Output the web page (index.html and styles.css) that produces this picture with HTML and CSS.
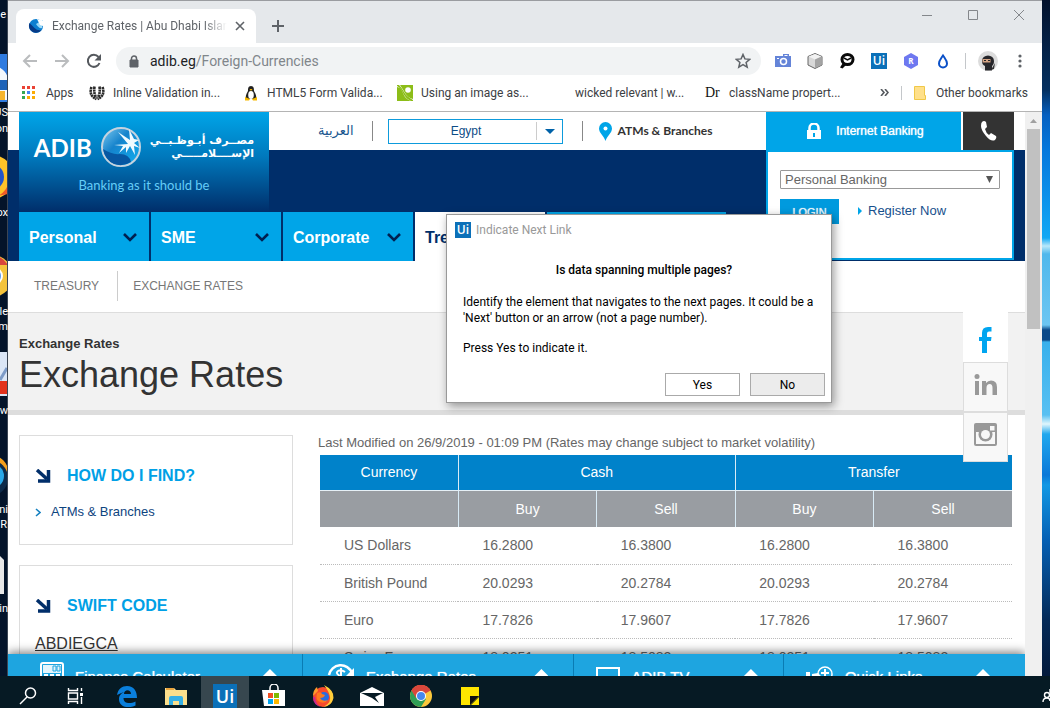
FILE: index.html
```html
<!DOCTYPE html>
<html lang="en">
<head>
<meta charset="utf-8">
<title>Exchange Rates | Abu Dhabi Islamic Bank</title>
<link rel="stylesheet" href="styles.css">
</head>
<body class="desktop">
<div class="workspace">
  <svg class="edge edge-left" width="8" height="676" viewBox="0 0 8 676" aria-hidden="true">
    <rect width="8" height="676" fill="#04142a"/>
    <rect y="54" width="8" height="48" fill="#2f7be0"/>
    <path d="M-8 66a16 16 0 0 1 16 12v22h-16z" fill="#f4f8fc"/><path d="M0 80h8v10H0z" fill="#1f64b8"/><path d="M0 91h5v9H0z" fill="#f6b52e"/>
    <circle cx="-8" cy="177" r="22" fill="#ffc328"/><circle cx="-9" cy="177" r="13" fill="#2456c8"/><path d="M8 160q6 28-10 36L8 194z" fill="#f05a28"/>
    <circle cx="-8" cy="276" r="21" fill="#f4c33c"/><path d="M-8 255a21 21 0 0 1 16 10H-8z" fill="#d8453c"/><circle cx="-6" cy="276" r="8" fill="#5a98ee" stroke="#fff" stroke-width="2"/>
    <rect y="352" width="8" height="44" fill="#dbe6f6"/><path d="M0 380l7-12" stroke="#7d9bc8" stroke-width="3"/><rect y="381" width="8" height="13" fill="#e3331d"/>
    <circle cx="-10" cy="474" r="19" fill="#f5a01c"/><circle cx="-10" cy="478" r="18" fill="#0e2b4a"/><circle cx="-8" cy="476" r="12" fill="#2aa8e8"/>
    <path d="M0 556l4 4v34H0z" fill="#e8e8e8"/>
    <rect x="7" width="1" height="676" fill="#3c4654"/>
    <g fill="#fff" font-family="Roboto, sans-serif" font-size="11" text-anchor="end">
      <text x="6" y="18">e</text><text x="8" y="116">US</text><text x="8" y="132">on</text><text x="8" y="216">ox</text>
      <text x="8" y="315">gle</text><text x="8" y="330">m</text><text x="8" y="414">ew</text><text x="8" y="513">ni</text><text x="7" y="528">R</text><text x="8" y="612">in</text>
    </g>
  </svg>

  <main class="window">
    <div class="tabstrip">
      <div class="tab">
        <svg width="16" height="16" viewBox="0 0 16 16"><circle cx="8" cy="8" r="7" fill="#0d7fd0"/><path d="M1.500 5a7 7 0 0 0 12 7q-4 1-7-2T1.500 5z" fill="#073a86"/><path d="M8 6l7-4-1 8q-3 1-6-4z" fill="#9ad9f8"/><path d="M9 1l6 2v5l-3-1z" fill="#fff"/></svg>
        <span class="tab-title">Exchange Rates | Abu Dhabi Islamic</span>
        <button class="icon-btn" aria-label="Close tab"><svg width="10" height="10" viewBox="0 0 10 10"><path d="M1 1l8 8M9 1l-8 8" stroke="#5f6368" stroke-width="1.6"/></svg></button>
      </div>
      <button class="icon-btn newtab" aria-label="New tab"><svg width="14" height="14" viewBox="0 0 14 14"><path d="M7 1v12M1 7h12" stroke="#5f6368" stroke-width="2"/></svg></button>
      <div class="win-buttons">
        <button class="icon-btn" aria-label="Minimize"><svg width="12" height="12" viewBox="0 0 12 12"><path d="M1 6.500h10" stroke="#84878b"/></svg></button>
        <button class="icon-btn" aria-label="Maximize"><svg width="12" height="12" viewBox="0 0 12 12"><path d="M1.500 1.500h9v9h-9z" fill="none" stroke="#84878b"/></svg></button>
        <button class="icon-btn" aria-label="Close window"><svg width="12" height="12" viewBox="0 0 12 12"><path d="M1 1l10 10M11 1L1 11" stroke="#84878b"/></svg></button>
      </div>
    </div>

    <div class="toolbar">
      <div class="nav-buttons">
        <button class="icon-btn" aria-label="Back"><svg width="16" height="16" viewBox="0 0 16 16"><path d="M15 8H2M8 2L2 8l6 6" fill="none" stroke="#babcbe" stroke-width="2"/></svg></button>
        <button class="icon-btn" aria-label="Forward"><svg width="16" height="16" viewBox="0 0 16 16"><path d="M1 8h13M8 2l6 6-6 6" fill="none" stroke="#babcbe" stroke-width="2"/></svg></button>
        <button class="icon-btn" aria-label="Reload"><svg width="16" height="16" viewBox="0 0 16 16"><path d="M13.500 10A6 6 0 1 1 12.500 4" fill="none" stroke="#55595e" stroke-width="2"/><path d="M15 1v6.500H8.500z" fill="#55595e"/></svg></button>
      </div>
      <div class="omnibox">
        <svg width="10" height="13" viewBox="0 0 10 13"><path d="M1 5h8v7H1z" fill="#5f6368" stroke="#5f6368"/><path d="M2.500 5V3.500a2.500 2.500 0 0 1 5 0V5" fill="none" stroke="#5f6368" stroke-width="1.500"/></svg>
        <a class="url" href="#"><b>adib.eg</b>/Foreign-Currencies</a>
        <button class="icon-btn" aria-label="Bookmark this page"><svg width="16" height="16" viewBox="0 0 16 16"><path d="M8 1.500l1.900 4.400 4.800.4-3.600 3.200 1.100 4.700L8 11.700l-4.200 2.500 1.100-4.700L1.300 6.300l4.800-.4z" fill="none" stroke="#5f6368" stroke-width="1.500"/></svg></button>
      </div>
      <div class="extensions">
        <svg width="16" height="16" viewBox="0 0 16 16"><path d="M0 3h8V1h6v2h2v11H0z" fill="#6484d8"/><path d="M9.500 2h3v1h-3z" fill="#fff"/><circle cx="8.500" cy="8.500" r="3" fill="#6484d8" stroke="#fff" stroke-width="1.500"/><path d="M2 5.500h2" stroke="#fff"/></svg>
        <svg width="16" height="16" viewBox="0 0 16 16"><path d="M8 .5l7 3v8.500l-7 3.500-7-3.500V3.500z" fill="#d8d8d8" stroke="#666"/><path d="M1.500 3.500l6.500 3 6.500-3-6.500-2.500z" fill="#f2f2f2"/><path d="M8 6.500l6.500-3V12L8 15z" fill="#a4a4a4"/></svg>
        <svg width="16" height="16" viewBox="0 0 16 16"><ellipse cx="8.500" cy="6.500" rx="5.500" ry="5" fill="#fff" stroke="#0a0a0a" stroke-width="3"/><path d="M4.500 9L1 14.500l2.500 1L8 11z" fill="#0a0a0a"/><path d="M5 5l3.500 2L12 5" fill="none" stroke="#0a0a0a" stroke-width="1.500"/></svg>
        <span class="ui-badge">Ui</span>
        <svg width="16" height="16" viewBox="0 0 16 16"><path d="M8 0l7 4v8l-7 4-7-4V4z" fill="#6e78f0"/><text x="8" y="11" font-family="Open Sans, sans-serif" font-size="8" font-weight="700" fill="#fff" text-anchor="middle">R</text></svg>
        <svg width="16" height="16" viewBox="0 0 16 16"><path d="M8 2.500c2 3 4 5 4 8a4 4 0 0 1-8 0c0-3 2-5 4-8z" fill="#fff" stroke="#0a50c8" stroke-width="2"/><path d="M4.500 11a3.500 3.500 0 0 0 7 0l-1 3-2.500 1-2.500-1z" fill="#0a50c8"/></svg>
      </div>
      <div class="profile">
        <svg width="20" height="20" viewBox="0 0 20 20"><circle cx="10" cy="10" r="10" fill="#dcdcdc"/><path d="M4 10a6 5.500 0 0 1 12 0c0 3-1 4-2 5v4.500H7V15c-2-1-3-2-3-5z" fill="#26262a"/><path d="M4.500 8h8v3.500h-8z" fill="#d3a384"/><path d="M6 9.500h2M10 9.500h2" stroke="#222"/><path d="M17 12l-1 6-3 1z" fill="#333"/></svg>
        <button class="icon-btn" aria-label="Menu"><svg width="4" height="14" viewBox="0 0 4 14" fill="#5f6368"><circle cx="2" cy="2" r="1.600"/><circle cx="2" cy="7" r="1.600"/><circle cx="2" cy="12" r="1.600"/></svg></button>
      </div>
    </div>

    <nav class="bookmarks" aria-label="Bookmarks">
      <a class="apps" href="#"><svg width="14" height="14" viewBox="0 0 14 14"><path d="M0 0h3v3H0zM5 0h3v3H5zM10 0h3v3h-3z" fill="#ea4335"/><path d="M0 5h3v3H0zM0 10h3v3H0z" fill="#34a853"/><path d="M5 5h3v3H5z" fill="#4285f4"/><path d="M10 5h3v3h-3zM5 10h3v3H5zM10 10h3v3h-3z" fill="#fbac04"/></svg>Apps</a>
      <a class="bookmark" href="#"><svg width="16" height="16" viewBox="0 0 16 16"><path d="M5.500 1.500q-1 8 2 11M2.500 2q-3 9 5 12M10.500 1.500q1 8-2 11M13.500 2q3 9-5 12" fill="none" stroke="#2a2a2a" stroke-width="2.600" stroke-dasharray="2.200 .5"/></svg><span>Inline Validation in...</span></a>
      <a class="bookmark" href="#"><svg width="16" height="16" viewBox="0 0 16 16"><path d="M8 1c3 0 3 3 3 5 1 2 3 5 2 8H3c-1-3 1-6 2-8 0-2 0-5 3-5z" fill="#222"/><ellipse cx="8" cy="10" rx="2.800" ry="4" fill="#fff"/><path d="M6.500 4h3L8 6z" fill="#f5b800"/><path d="M2 12l5 2-1 1.500H2zM14 12l-5 2 1 1.500h4z" fill="#f5b800"/></svg><span>HTML5 Form Valida...</span></a>
      <a class="bookmark" href="#"><svg width="16" height="16" viewBox="0 0 16 16"><path d="M0 0h16v16H0z" fill="#8cbd18"/><path d="M0 2q4 0 6 6t8 8h2v-2q-5-1-8-6T3 0H0z" fill="#fff"/><path d="M0 0h2q3 3 5 7t9 8v1h-2q-6-3-8-8T0 1z" fill="#8cbd18"/><circle cx="11" cy="5" r="2.800" fill="#fff"/></svg><span>Using an image as...</span></a>
      <a class="bookmark" href="#"><i class="no-icon"></i><span>wicked relevant | w...</span></a>
      <a class="bookmark" href="#"><b class="serif-mark">Dr</b><span>className propert...</span></a>
      <button class="icon-btn overflow" aria-label="More bookmarks"><svg width="9" height="7" viewBox="0 0 9 7"><path d="M1 0l3 3.500L1 7M5 0l3 3.500L5 7" fill="none" stroke="#55595e" stroke-width="1.600"/></svg></button>
      <a class="other" href="#"><svg width="12" height="14" viewBox="0 0 12 14"><path d="M.5.5h10v9h1v4H.5z" fill="#ffe08a" stroke="#f0c848"/></svg>Other bookmarks</a>
    </nav>

    <div class="viewport">
      <div class="page">
        <div class="page-content">
          <header class="site-header">
            <div class="header-main">
              <div class="header-top">
                <a class="logo" href="#">
                  <span class="logo-row">
                    <span class="logo-name">ADIB</span>
                    <svg width="42" height="42" viewBox="0 0 42 42"><defs><linearGradient id="globe" x1="0" y1="0" x2="1" y2="1"><stop offset="0" stop-color="#7fcbf0"/><stop offset=".4" stop-color="#1583cc"/><stop offset="1" stop-color="#12b0f0"/></linearGradient></defs><circle cx="21" cy="21" r="19" fill="url(#globe)" stroke="#c4d3df" stroke-width="2"/><path d="M3 23q9 6 17 5 9 0 11 8-8 5-17 2-9-4-11-15z" fill="#0757a2"/><path d="M14 19l14-1L18 6l12 8-1-11 5 10 5 1-5 3 6 5-6-2 1 9-5-9-4 7v-6l-7 6 4-7z" fill="#f2fbff"/></svg>
                    <span class="logo-arabic" lang="ar" dir="rtl">مصــرف أبـوظـبــي<br>الإســــلامـــــي</span>
                  </span>
                  <span class="tagline">Banking as it should be</span>
                </a>
                <div class="utilities">
                  <a class="lang" lang="ar" href="#">العربية</a>
                  <label class="country"><select aria-label="Country"><option>Egypt</option></select><svg width="26" height="18" viewBox="0 0 26 18"><path d="M.5 0v18" stroke="#ccc"/><path d="M9 7h10l-5 5z" fill="#0062a8"/></svg></label>
                  <a class="branches" href="#"><svg width="13" height="19" viewBox="0 0 13 19"><path d="M6.500 0A6.500 6.500 0 0 1 13 6.500C13 11 8 14 6.500 19 5 14 0 11 0 6.500A6.500 6.500 0 0 1 6.500 0z" fill="#00a5e8"/><circle cx="6.500" cy="6.500" r="2" fill="#fff"/></svg>ATMs &amp; Branches</a>
                </div>
              </div>
              <nav class="main-nav">
                <a href="#">Personal<svg width="14" height="9" viewBox="0 0 14 9"><path d="M1 1l6 6 6-6" fill="none" stroke="#002050" stroke-width="2.600"/></svg></a>
                <a href="#">SME<svg width="14" height="9" viewBox="0 0 14 9"><path d="M1 1l6 6 6-6" fill="none" stroke="#002050" stroke-width="2.600"/></svg></a>
                <a href="#">Corporate<svg width="14" height="9" viewBox="0 0 14 9"><path d="M1 1l6 6 6-6" fill="none" stroke="#002050" stroke-width="2.600"/></svg></a>
                <a class="current" href="#">Treasury</a>
                <a class="wide" href="#" aria-label="More"></a>
              </nav>
            </div>
            <div class="banking">
              <div class="banking-tabs">
                <a class="internet" href="#"><svg width="14" height="16" viewBox="0 0 14 16"><path d="M0 7h14v9H0z" fill="#fff"/><path d="M2.500 8V5a4.500 4.500 0 0 1 9 0v3" fill="none" stroke="#fff" stroke-width="2.500"/><path d="M7 10v4" stroke="#00a5e8" stroke-width="2"/></svg>Internet Banking</a>
                <a class="phone" href="#" aria-label="Phone banking"><svg width="16" height="20" viewBox="0 0 16 20"><path d="M1 1q2-2 4 0l1 5-2 2q1 4 4 6l2-2 5 3q1 2-1 4-4 2-9-4T0 5q0-3 1-4z" fill="#fff"/></svg></a>
              </div>
              <form class="login">
                <label class="account"><select aria-label="Account type"><option>Personal Banking</option></select><svg width="8" height="8" viewBox="0 0 8 8"><path d="M0 0h7L3.500 7z" fill="#555"/></svg></label>
                <div class="login-row"><button class="login-btn" type="button">LOGIN</button><a class="register" href="#"><svg width="4" height="8" viewBox="0 0 4 8"><path d="M0 0l4 4-4 4z" fill="#00a5e8"/></svg>Register Now</a></div>
              </form>
            </div>
          </header>

          <nav class="subnav"><a href="#">TREASURY</a><a href="#">EXCHANGE RATES</a></nav>

          <section class="title-band"><p>Exchange Rates</p><h1>Exchange Rates</h1></section>

          <div class="columns">
            <aside class="sidebar">
              <section class="card">
                <h2><svg width="16" height="15" viewBox="0 0 16 15"><path d="M2 1l10 9" stroke="#002e6a" stroke-width="3.500"/><path d="M13.500 1v11H3" fill="none" stroke="#002e6a" stroke-width="3.500"/></svg>HOW DO I FIND?</h2>
                <a class="card-link" href="#"><svg width="6" height="9" viewBox="0 0 6 9"><path d="M1 1l4 3.500L1 8" fill="none" stroke="#1580c0" stroke-width="1.600"/></svg>ATMs &amp; Branches</a>
              </section>
              <section class="card">
                <h2><svg width="16" height="15" viewBox="0 0 16 15"><path d="M2 1l10 9" stroke="#002e6a" stroke-width="3.500"/><path d="M13.500 1v11H3" fill="none" stroke="#002e6a" stroke-width="3.500"/></svg>SWIFT CODE</h2>
                <a class="swift" href="#">ABDIEGCA</a>
              </section>
            </aside>
            <section class="rates">
              <p>Last Modified on 26/9/2019 - 01:09 PM (Rates may change subject to market volatility)</p>
              <table>
                <thead>
                  <tr><th>Currency</th><th colspan="2">Cash</th><th colspan="2">Transfer</th></tr>
                  <tr class="sub"><th></th><th>Buy</th><th>Sell</th><th>Buy</th><th>Sell</th></tr>
                </thead>
                <tbody>
                  <tr><td>US Dollars</td><td>16.2800</td><td>16.3800</td><td>16.2800</td><td>16.3800</td></tr>
                  <tr><td>British Pound</td><td>20.0293</td><td>20.2784</td><td>20.0293</td><td>20.2784</td></tr>
                  <tr><td>Euro</td><td>17.7826</td><td>17.9607</td><td>17.7826</td><td>17.9607</td></tr>
                  <tr><td>Swiss Franc</td><td>18.0251</td><td>18.5082</td><td>18.0251</td><td>18.5082</td></tr>
                </tbody>
              </table>
            </section>
          </div>
        </div>

        <div class="quickbar">
          <a class="q1" href="#"><svg width="24" height="28" viewBox="0 0 24 28"><rect x="1" y="1" width="22" height="26" rx="2" fill="none" stroke="#fff" stroke-width="2"/><path d="M3 3h18v8H3z" fill="#e4f5fc"/><path d="M13 4h3v5h-3zM17 4h3v5h-3z" fill="none" stroke="#1ea5e0"/><path d="M4 13h4M10 13h4M16 13h4" stroke="#fff" stroke-width="2"/></svg>Finance Calculator</a>
          <a class="q2" href="#"><svg width="28" height="26" viewBox="0 0 28 26"><path d="M2 12A12 12 0 0 1 25 10" fill="none" stroke="#fff" stroke-width="2.500"/><path d="M27 5v8h-8z" fill="#fff"/><path d="M18 9q-4-3-7-1t2 5 5 4-7 2M14 5v16" fill="none" stroke="#fff" stroke-width="2"/></svg>Exchange Rates</a>
          <a class="q3" href="#"><svg width="24" height="18" viewBox="0 0 24 18"><rect x="1" y="1" width="22" height="15" fill="none" stroke="#fff" stroke-width="2"/></svg>ADIB TV</a>
          <a class="q4" href="#"><svg width="28" height="20" viewBox="0 0 28 20"><path d="M0 6h4v14H0zM6 8l6-1 3 3v9H6z" fill="#fff"/><circle cx="19" cy="8" r="7" fill="none" stroke="#fff" stroke-width="1.500"/><path d="M19 3v9M15 7h8" stroke="#fff" stroke-width="2"/></svg>Quick Links</a>
        </div>

        <div class="share">
          <a href="#" class="fb" aria-label="Facebook"><svg width="13" height="26" viewBox="0 0 13 26"><path d="M3 26V14H0v-4h3V6q0-6 6-6h3.500v4.500H10Q8 4.500 8 6.500V10h4.500l-.5 4H8v12z" fill="#00a5f0"/></svg></a>
          <a href="#" aria-label="LinkedIn"><svg width="23" height="21" viewBox="0 0 23 21"><path d="M1 7h4v14H1zM8 7h4v2q2-2.500 5-2.500 6 0 6 6.500v8h-4.500v-7q0-4-2.700-4-3.300 0-3.300 4v7H8z" fill="#999"/><circle cx="3" cy="2.500" r="2.500" fill="#999"/></svg></a>
          <a href="#" aria-label="Instagram"><svg width="23" height="23" viewBox="0 0 23 23"><rect width="23" height="23" rx="2" fill="#999"/><path d="M2 9h3q0 9 6.500 9T18 9h3v12H2z" fill="#f8f8f8"/><circle cx="11.500" cy="11.500" r="7" fill="#999"/><circle cx="11.500" cy="11.500" r="4.500" fill="#f8f8f8"/><rect x="16" y="3" width="4.500" height="4.500" fill="#f8f8f8"/></svg></a>
        </div>
      </div>
      <div class="scrollbar"><svg width="17" height="17" viewBox="0 0 17 17"><path d="M5 11l3.500-4 3.500 4z" fill="#a0a0a0"/></svg><div class="thumb"></div></div>
    </div>
  </main>
  <div class="edge edge-right"></div>
</div>

<section class="dialog" role="dialog" aria-labelledby="dialog-title">
  <h2 class="dialog-title" id="dialog-title"><span class="ui-badge">Ui</span>Indicate Next Link</h2>
  <p class="question">Is data spanning multiple pages?</p>
  <p>Identify the element that navigates to the next pages. It could be a<br>'Next' button or an arrow (not a page number).</p>
  <p>Press Yes to indicate it.</p>
  <div class="actions"><button type="button">Yes</button><button class="no" type="button">No</button></div>
</section>

<footer class="taskbar">
  <button class="task" aria-label="Search"><svg width="18" height="18" viewBox="0 0 18 18"><circle cx="11.500" cy="6" r="5" fill="none" stroke="#fff" stroke-width="1.500"/><path d="M8 10l-7 7" stroke="#fff" stroke-width="1.500"/></svg></button>
  <button class="task" aria-label="Task view"><svg width="18" height="16" viewBox="0 0 18 16"><path d="M1.500 0v2.500h9V0M1.500 16v-2.500h9V16M1.500 5h9v6h-9zM14.500 0v3M14.500 9v7" fill="none" stroke="#fff" stroke-width="1.400"/><path d="M13 5h3v3h-3z" fill="#fff"/></svg></button>
  <div class="pinned">
    <button class="task" aria-label="Edge"><svg width="20" height="21" viewBox="0 0 20 21"><path d="M0 9C1 3 5 0 10 0c7 0 10 5 10 12H6.500c0 6 7 6 12 3.500v4C11 23 2 21 2 13c0-4 3-6 5-7q-3 1-7 3zM7 8h7c0-5-7-5-7 0z" fill="#0a7fdc"/></svg></button>
    <button class="task" aria-label="File Explorer"><svg width="22" height="19" viewBox="0 0 22 19"><path d="M0 1h9l2 2h11v15H0z" fill="#fbdf8c"/><path d="M1 1h8v2H1z" fill="#e8a33d"/><path d="M4 18v-7q0-2 2-2h10q2 0 2 2v7h-4v-4H8v4z" fill="#35b0e6"/></svg></button>
    <button class="task active" aria-label="UiPath"><span class="ui-badge large">Ui</span></button>
    <button class="task" aria-label="Store"><svg width="24" height="24" viewBox="0 0 24 24"><path d="M8 7V4a4 4 0 0 1 8 0v3" fill="none" stroke="#fff" stroke-width="1.500"/><path d="M0 6h23v16H2z" fill="#fff"/><path d="M6 9h5v5H6z" fill="#f25022"/><path d="M12 9h5v5h-5z" fill="#7fba00"/><path d="M6 15h5v5H6z" fill="#00a4ef"/><path d="M12 15h5v5h-5z" fill="#ffb900"/></svg></button>
    <button class="task" aria-label="Firefox"><svg width="22" height="22" viewBox="0 0 22 22"><circle cx="11" cy="12" r="10" fill="#f84a2c"/><path d="M12 0q10 5 9.500 13-2 8-10 9 9-5 6-12-1-4-5.500-10z" fill="#ffce3a"/><path d="M1 11q0-6 4-9l1 4z" fill="#ff9a2a"/><circle cx="12" cy="12" r="5" fill="#2a6ce0"/><path d="M5 8q4-2 5 1l3 1q-1 3-5 3 2 4 8 2-3 4-8 2T5 8z" fill="#ff7a1e"/><path d="M1 12q0 8 8 10-5-2-6-10z" fill="#c8288e"/></svg></button>
    <button class="task" aria-label="Mail"><svg width="24" height="19" viewBox="0 0 24 19"><path d="M0 6l12-6 12 6v13H0z" fill="#fff"/><path d="M1 6h22l-8 4 4 6-7-5z" fill="#061a24"/></svg></button>
    <button class="task" aria-label="Chrome"><svg width="22" height="22" viewBox="0 0 22 22"><circle cx="11" cy="11" r="11" fill="#fbc83c"/><path d="M11 11L1.500 5.500A11 11 0 0 1 20.500 5.500z" fill="#d9473c"/><path d="M1.500 5.500A11 11 0 0 0 11 22l5-8-5-3z" fill="#2f9e56"/><path d="M11 6h9.800A11 11 0 0 0 1.500 5.500L6 13z" fill="#d9473c"/><circle cx="11" cy="11" r="5" fill="#fff"/><circle cx="11" cy="11" r="4" fill="#4688f0"/></svg></button>
    <button class="task" aria-label="Sticky Notes"><svg width="18" height="18" viewBox="0 0 18 18"><path d="M0 0h18v9l-9 9H0z" fill="#ffe600"/><path d="M9 18V9h9z" fill="#111"/><path d="M10 18h8v-8z" fill="#ffe600"/></svg></button>
  </div>
  <svg class="people" width="8" height="16" viewBox="0 0 8 16"><circle cx="5" cy="7" r="2.500" fill="none" stroke="#fff" stroke-width="1.400"/><path d="M1 14q0-4 4-4 3 0 3 3M8 1v4" fill="none" stroke="#fff" stroke-width="1.400"/></svg>
</footer>
</body>
</html>
```
FILE: styles.css
```css
* { box-sizing: border-box; }
a { color: inherit; text-decoration: none; }
button, select { font: inherit; color: inherit; }
h1, h2, p { margin: 0; }
svg { display: block; flex: none; }

.desktop {
  margin: 0;
  height: 100vh;
  overflow: hidden;
  display: flex;
  flex-direction: column;
  position: relative;
  background: #04142a;
  font-family: "Liberation Sans", Arial, sans-serif;
}
.workspace { flex: 1; min-height: 0; display: flex; overflow: hidden; }
.edge { width: 8px; flex: none; }
.edge-right {
  background: linear-gradient(#03122c 0, #043060 90px, #0560c0 115px, #0478dc 150px, #0a90ea 195px, #12a8f4 238px, #b8e8fa 246px, #50b8ec 254px, #6cc6f2 325px, #0a4888 330px, #0a4888 340px, #38b0ec 342px, #58c0f2 415px, #e0f6fc 424px, #20a8ee 434px, #0a78d8 475px, #1298e4 485px, #0560b4 540px, #042a58 620px, #031a3c 676px);
}
.window { flex: 1; min-width: 0; display: flex; flex-direction: column; background: #fff; }

/* Browser frame */
.icon-btn { display: flex; align-items: center; justify-content: center; padding: 0; border: 0; background: none; }
.tabstrip { height: 43px; display: flex; align-items: flex-end; padding: 0 9px 0 8px; background: #e5e8eb; border-top: 1px solid #9a9ca0; }
.tab { width: 240px; height: 34px; display: flex; align-items: center; gap: 8px; padding: 0 11px 0 12px; background: #fff; border-radius: 8px 8px 0 0; }
.tab-title {
  flex: 1; overflow: hidden; white-space: nowrap;
  font: 12px Roboto, sans-serif; color: #5f6368;
  -webkit-mask-image: linear-gradient(to left, transparent, #000 24px);
  mask-image: linear-gradient(to left, transparent, #000 24px);
}
.newtab { width: 14px; height: 34px; margin-left: 15px; }
.win-buttons { margin-left: auto; align-self: flex-start; display: flex; gap: 34px; padding: 8px 8px 0; }
.toolbar { height: 36px; display: flex; align-items: center; padding-right: 20px; }
.nav-buttons { display: flex; gap: 16px; padding: 0 14px; }
.omnibox { flex: 1; height: 28px; display: flex; align-items: center; gap: 11px; padding: 0 10px 0 13px; border-radius: 14px; background: #f1f3f4; }
.url { flex: 1; font: 14px Roboto, sans-serif; color: #80868b; }
.url b { font-weight: 400; color: #202124; }
.extensions { display: flex; gap: 16px; padding: 0 14px; border-right: 1px solid #c4c7ca; }
.profile { display: flex; align-items: center; gap: 20px; padding-left: 12px; }
.ui-badge { width: 16px; height: 16px; flex: none; background: #0b70b8; color: #fff; font: 600 12px/15px "Open Sans", sans-serif; text-align: center; }
.ui-badge.large { width: 24px; height: 24px; font-size: 18px; line-height: 24px; }
.bookmarks { height: 33px; display: flex; align-items: center; padding: 0 14px 5px; border-bottom: 1px solid #b4b4b4; font: 12px Roboto, sans-serif; color: #3c4043; white-space: nowrap; }
.apps { width: 67px; display: flex; align-items: center; gap: 10px; }
.bookmark { width: 154px; display: flex; align-items: center; gap: 8px; }
.no-icon, .serif-mark { width: 16px; flex: none; }
.serif-mark { font: 14px "Liberation Serif", serif; color: #111; }
.overflow { width: 24px; margin-left: auto; }
.other { display: flex; align-items: center; gap: 10px; padding-left: 12px; margin-left: 4px; border-left: 1px solid #c4c7ca; }

/* Page viewport */
.viewport { flex: 1; min-height: 0; display: flex; }
.page { flex: 1; min-width: 0; display: flex; flex-direction: column; position: relative; }
.page-content { flex: 1; min-height: 0; overflow: hidden; }
.scrollbar { width: 17px; background: #f0f0f0; }
.thumb { height: 200px; width: 13px; margin: 0 auto; background: #c1c1c1; }
.site-header { display: flex; padding: 0 11px; background: linear-gradient(#fff 38px, #002e6a 38px); }
.header-main { flex: 1; min-width: 0; }
.header-top { display: flex; align-items: flex-start; }
.logo { width: 250px; height: 100px; flex: none; display: flex; flex-direction: column; align-items: center; gap: 8px; padding-top: 14px; background: linear-gradient(#00a5e8, #0078bc 45px, #002e6a); }
.logo-row { display: flex; align-items: center; gap: 8px; }
.logo-name { color: #fff; font: 700 24px Lato, sans-serif; }
.logo-arabic { color: #fff; font: 700 11px/13px "DejaVu Sans", sans-serif; white-space: nowrap; }
.tagline { color: #64cdf8; font: 13px/18px Lato, sans-serif; }
.utilities { height: 38px; display: flex; align-items: center; padding-left: 49px; white-space: nowrap; }
.lang { padding-right: 18px; border-right: 1px solid #888; font: 13px/20px "DejaVu Sans", sans-serif; color: #17568e; }
.country { width: 175px; height: 25px; margin: 0 19px 0 15px; display: flex; align-items: center; border: 1px solid #0d9bdc; }
.country select { flex: 1; min-width: 0; appearance: none; border: 0; background: none; padding: 0 0 0 8px; text-align: center; text-align-last: center; font-size: 12px; color: #0d4c86; }
.branches { display: flex; align-items: center; gap: 6px; padding-left: 16px; border-left: 1px solid #888; font: 700 12px/20px Lato, sans-serif; color: #333; }
.main-nav { display: flex; gap: 2px; }
.main-nav a { width: 130px; height: 49px; display: flex; align-items: center; justify-content: space-between; padding: 2px 12px 0 10px; background: #00a5e8; color: #fff; font-size: 16px; font-weight: 700; }
.main-nav .current { background: #fff; color: #002e6a; }
.main-nav .wide { width: 179px; }
.banking { width: 248px; flex: none; display: flex; flex-direction: column; padding-bottom: 1px; }
.banking-tabs { height: 38px; display: flex; gap: 2px; }
.internet { flex: 1; display: flex; align-items: center; justify-content: center; gap: 15px; padding-left: 4px; background: #00a5e8; color: #fff; font-size: 12px; text-shadow: 0 0 1px #fff; }
.phone { width: 51px; display: flex; align-items: center; justify-content: center; background: #333; }
.login { flex: 1; padding: 18px 12px; border: 2px solid #00a5e8; background: #fff; color: #666; }
.account { height: 19px; display: flex; align-items: center; padding: 0 5px 0 0; border: 1px solid #999; border-radius: 1px; }
.account select { flex: 1; appearance: none; border: 0; padding: 0 4px; background: none; font-size: 13px; line-height: 17px; }
.login-row { display: flex; align-items: center; gap: 19px; padding-top: 10px; }
.login-btn { width: 59px; height: 25px; padding: 0; border: 0; background: #009ade; color: #e8f6fd; font-size: 11px; text-shadow: 0 0 1px #fff; }
.register { display: flex; align-items: center; gap: 6px; margin-bottom: 2px; font-size: 13px; line-height: 16px; color: #17508c; }
.subnav { height: 52px; display: flex; align-items: center; padding: 0 10px 2px; color: #777; font-size: 12px; border-bottom: 1px solid #ddd; }
.subnav a { padding: 0 18px 0 16px; line-height: 30px; }
.subnav a + a { padding-left: 15px; border-left: 1px solid #ccc; }
.title-band { height: 102px; padding: 23px 11px 0; background: #f2f2f2; border-bottom: 5px solid #ddd; color: #333; }
.title-band p { font-size: 13px; line-height: 16px; font-weight: 700; }
.title-band h1 { font-size: 36px; line-height: 46px; font-weight: 400; }
.columns { display: flex; align-items: flex-start; gap: 25px; padding: 20px 13px 0 11px; }
.sidebar { width: 274px; flex: none; display: flex; flex-direction: column; gap: 20px; }
.card { height: 110px; padding: 30px 15px 0; border: 1px solid #ddd; }
.card h2 { display: flex; align-items: center; gap: 16px; font-size: 16px; line-height: 20px; color: #00a0e6; }
.card-link { display: flex; align-items: center; gap: 10px; padding-top: 16px; font-size: 13px; line-height: 20px; color: #0d4480; }
.swift { display: inline-block; padding-top: 18px; font-size: 16px; line-height: 20px; color: #333; text-decoration: underline; }
.rates { flex: 1; min-width: 0; padding-left: 2px; color: #666; }
.rates p { margin-left: -2px; font-size: 13px; line-height: 16px; padding-bottom: 4px; white-space: nowrap; }
.rates table { width: 100%; border-collapse: collapse; table-layout: fixed; font-size: 14px; }
.rates th { height: 35px; padding: 0; font-weight: 400; color: #fff; background: #0082ca; border-left: 1px solid #d8ebf6; border-bottom: 1px solid #e6f0f6; }
.rates th:first-child { border-left: 0; }
.rates .sub th { height: 37px; background: #999da2; border-bottom: 0; }
.rates td { height: 37px; padding: 0 24px; border-bottom: 1px dotted #bbb; }
.quickbar { height: 22px; display: flex; position: relative; background: #1ea5e0; color: #fff; font-size: 15px; box-shadow: 0 -2px 10px rgba(0, 0, 0, .5); clip-path: inset(-14px 0 0 0); }
.quickbar a { display: flex; gap: 11px; height: 44px; align-items: center; padding-left: 32px; text-shadow: 0 0 1px #fff; border-right: 1px solid #0a7cb4; white-space: nowrap; }
.quickbar a::after { content: ""; width: 14px; height: 14px; margin: 0 25px 0 auto; background: #fff; clip-path: polygon(50% 0, 100% 50%, 0 50%); }
.quickbar .q1 { width: 29%; }
.quickbar .q2 { width: 26.7%; padding-left: 24px; }
.quickbar .q3 { width: 20.6%; padding-left: 22px; }
.quickbar .q4 { flex: 1; padding-left: 22px; border-right: 0; }
.quickbar .q4::after { margin-right: 35px; }
.share { position: absolute; right: 17px; top: 200px; width: 45px; }
.share a { height: 50px; display: flex; align-items: center; justify-content: center; padding-bottom: 5px; background: #f8f8f8; border: 1px solid #ddd; }
.share .fb { padding: 6px 0 0; background: #fff; border-color: #fff; }

/* Prompt */
.dialog { position: absolute; left: 446px; top: 214px; width: 386px; padding: 7px 6px 6px 16px; background: #fff; border: 1px solid #999; box-shadow: 2px 3px 9px rgba(0, 0, 0, .4); font: 12px/16px Roboto, sans-serif; color: #000; }
.dialog-title { display: flex; gap: 5px; margin-left: -8px; font: inherit; color: #999; }
.dialog p { margin-top: 14px; white-space: nowrap; }
.dialog .question { margin: 24px 0 16px; text-align: center; font-weight: 500; }
.actions { display: flex; justify-content: flex-end; gap: 10px; padding-top: 17px; }
.actions button { width: 75px; height: 23px; padding: 0; border: 1px solid #aaa; background: #fff; line-height: 16px; }
.actions .no { background: #ececec; }

/* Taskbar */
.taskbar { height: 32px; flex: none; display: flex; align-items: flex-start; padding-left: 4px; overflow: hidden; background: #061a24; }
.task { width: 48px; height: 40px; flex: none; display: flex; align-items: center; justify-content: center; padding: 0; border: 0; background: none; }
.task.active { background: #37474f; }
.pinned { display: flex; gap: 1px; padding-left: 3px; }
.people { margin: 12px 0 0 auto; }
```
